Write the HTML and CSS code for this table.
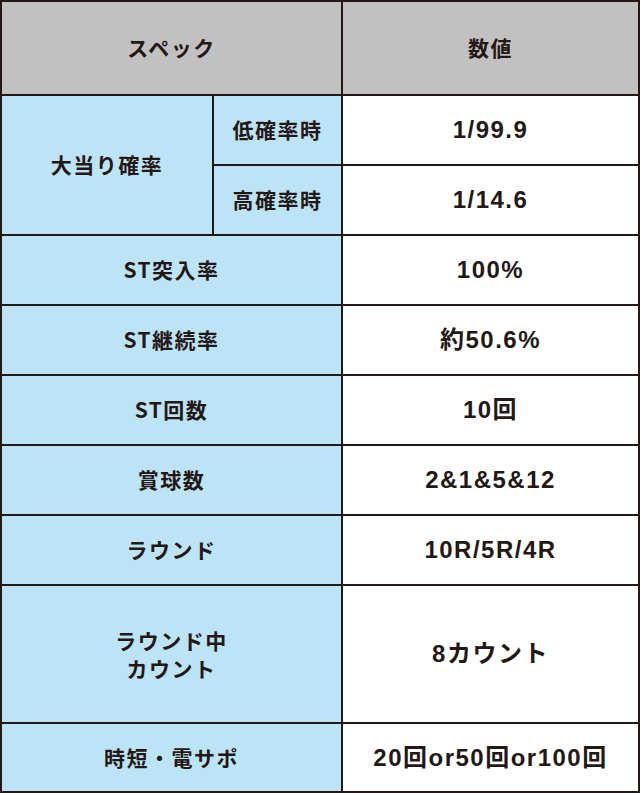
FILE: index.html
```html
<!DOCTYPE html>
<html lang="ja">
<head>
<meta charset="utf-8">
<link rel="stylesheet" href="styles.css">
</head>
<body>
<div class="spec">
  <div class="cell head label-main">スペック</div>
  <div class="cell head">数値</div>

  <div class="cell label rowspan2">大当り確率</div>
  <div class="cell label">低確率時</div>
  <div class="cell value">1/99.9</div>
  <div class="cell label">高確率時</div>
  <div class="cell value">1/14.6</div>

  <div class="cell label label-main">ST突入率</div>
  <div class="cell value">100%</div>

  <div class="cell label label-main">ST継続率</div>
  <div class="cell value">約50.6%</div>

  <div class="cell label label-main">ST回数</div>
  <div class="cell value">10回</div>

  <div class="cell label label-main">賞球数</div>
  <div class="cell value">2&amp;1&amp;5&amp;12</div>

  <div class="cell label label-main">ラウンド</div>
  <div class="cell value">10R/5R/4R</div>

  <div class="cell label label-main two-line"><span class="line">ラウンド中</span><span class="line">カウント</span></div>
  <div class="cell value">8カウント</div>

  <div class="cell label label-main">時短・電サポ</div>
  <div class="cell value">20回or50回or100回</div>
</div>
</body>
</html>
```
FILE: styles.css
```css
html, body {
  margin: 0;
  padding: 0;
  background: #ffffff;
}

.spec {
  width: 640px;
  height: 793px;
  box-sizing: border-box;
  display: grid;
  grid-template-columns: 210px 127px 295px;
  grid-template-rows: 92px repeat(7, 68px) 136px 67px;
  gap: 2px;
  padding: 2px;
  background: #231815;
  color: #231815;
  font-family: "Noto Sans CJK JP", sans-serif;
  font-weight: 700;
}

.cell {
  display: flex;
  align-items: center;
  justify-content: center;
  text-align: center;
  font-size: 21px;
  letter-spacing: 1.5px;
  line-height: 1.3;
}

.head {
  background: #c1c1c1;
}

.label {
  background: #bde3f7;
}

.label-main {
  grid-column: 1 / span 2;
}

.rowspan2 {
  grid-row: span 2;
}

.value {
  background: #ffffff;
  font-family: "Liberation Sans", "Noto Sans CJK JP", sans-serif;
  font-size: 24px;
  letter-spacing: 1.5px;
}

.two-line {
  flex-direction: column;
}

.line {
  display: block;
  line-height: 28px;
}
```
